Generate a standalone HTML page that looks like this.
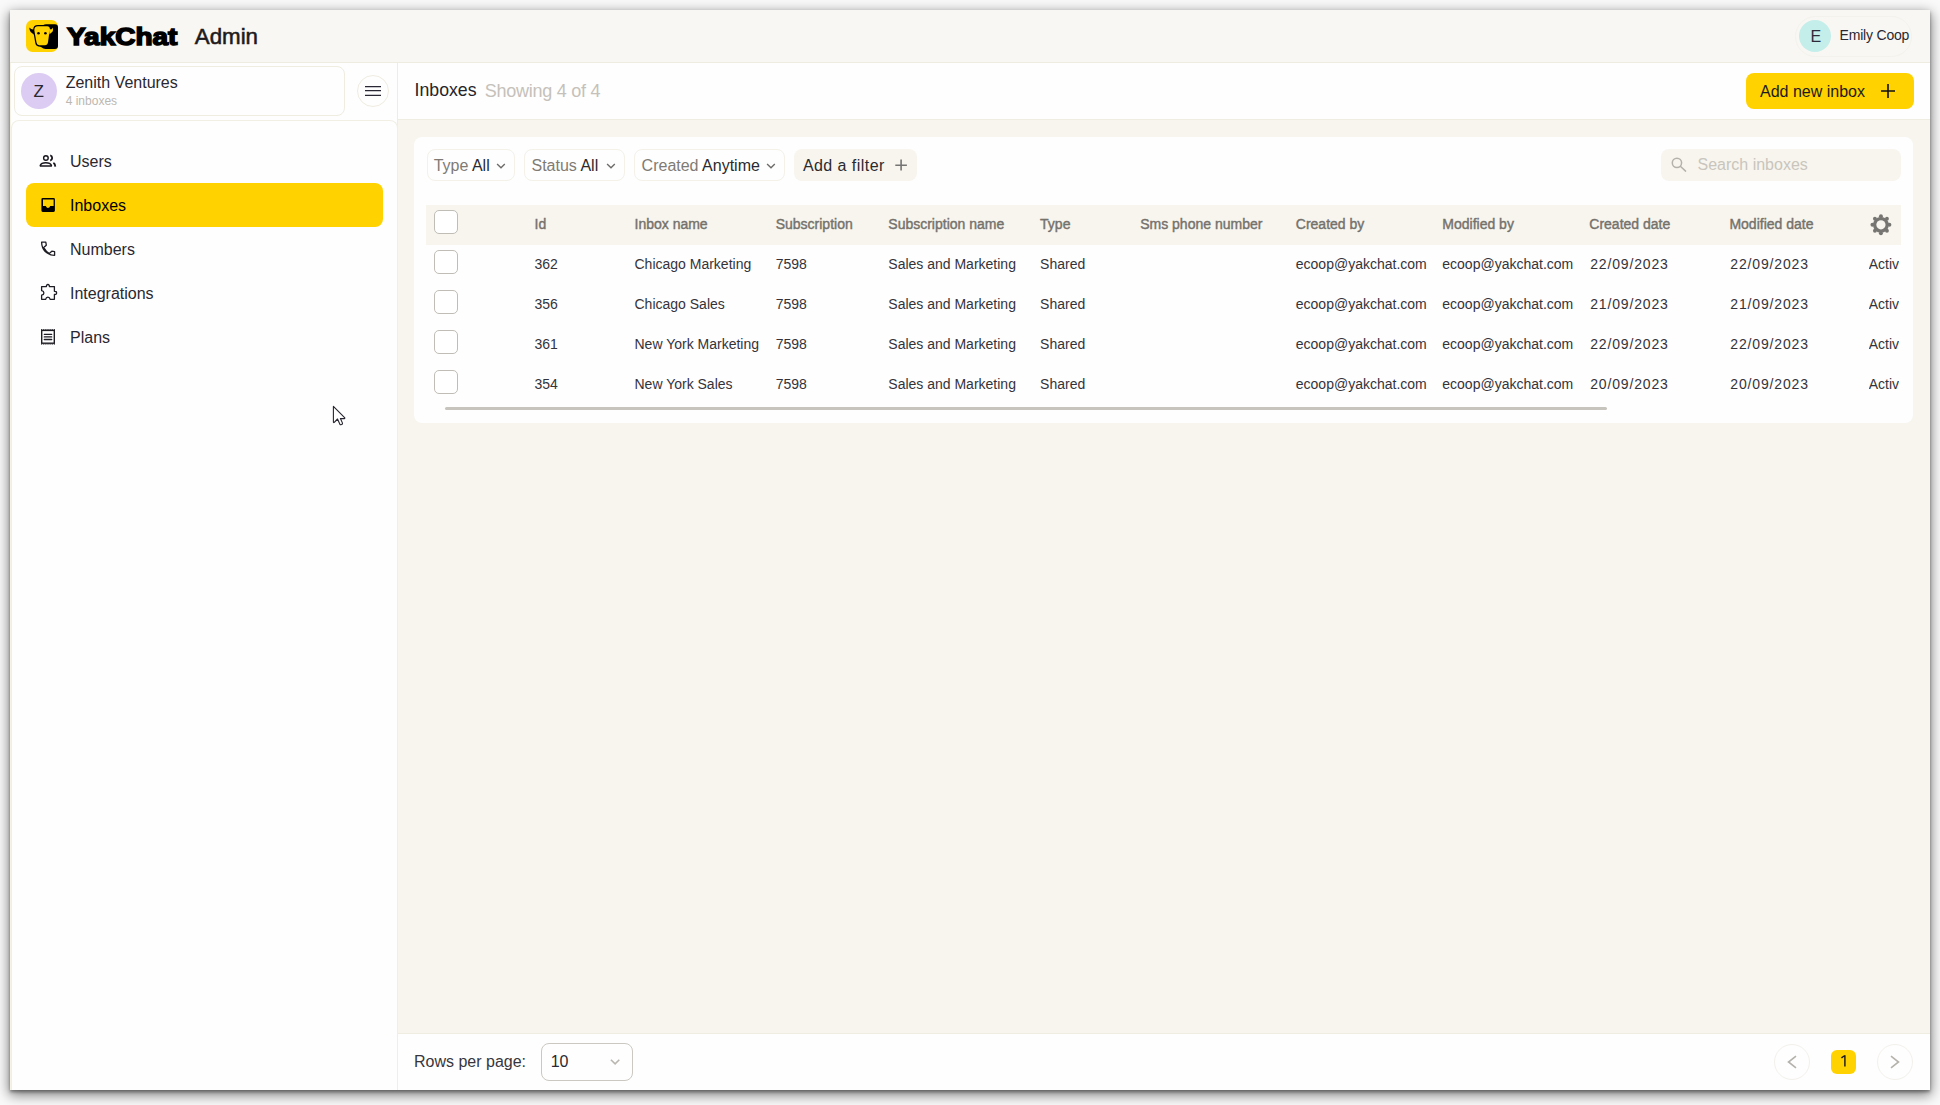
<!DOCTYPE html>
<html><head><meta charset="utf-8">
<style>
*{box-sizing:border-box;margin:0;padding:0}
html,body{width:1940px;height:1105px;overflow:hidden;background:#fafafa}
body{font-family:"Liberation Sans",sans-serif;color:#2a2830;position:relative}
.win{position:absolute;left:10px;top:10px;width:1920px;height:1080px;background:#f7f5ee;box-shadow:0 2px 3px rgba(0,0,0,.35),0 4px 12px 1px rgba(0,0,0,.5);overflow:hidden}
.a{position:absolute}
.t{position:absolute;line-height:1;white-space:nowrap}
svg{position:absolute;overflow:visible}
.chip{top:149px;height:32px;border:1px solid #f3f1e8;border-radius:8px}
.ft{top:158.2px;font-size:16px;color:#2b2a2e}
.fl{color:#7f7b74}
.cb{left:434px;width:24px;height:24px;border:1.3px solid #c0bdb6;border-radius:5px;background:#fff}
.th{top:216.8px;font-size:14px;color:#75716b;-webkit-text-stroke:0.4px #75716b}
.td{font-size:14px;color:#35333a}
.dt{letter-spacing:0.85px}
</style></head><body>
<div class="win"></div>

<!-- HEADER (page coords) -->
<div class="a" style="left:10px;top:10px;width:1920px;height:53px;background:#f8f7f3;border-bottom:1px solid #eeece0"></div>
<!-- logo -->
<svg style="left:26px;top:20px" width="32" height="32" viewBox="0 0 32 32">
  <rect x="0" y="0" width="32" height="32" rx="6.5" fill="#ffd200"/>
  <path d="M7.1 10.4 Q6.9 5.1 11.9 5.1 L17.4 4.9 Q18.3 4.2 20 4.2 H29 Q32 4.2 32 7.2 V26 Q32 28.9 29 28.9 H19.5 Q17.2 28.9 15.4 27.3 Q14.4 26.6 12.5 26.4 Q9.6 26 9.3 23 Z" fill="#000"/>
  <path d="M8.2 9.4 Q5.6 10 3.3 7.6 Q3.4 11.6 6.2 13.3 Q7.2 14 8.2 14.8 Z" fill="#000"/>
  <path d="M8.3 10.3 Q8.2 6.3 12 6.3 H21.2 Q23.8 6.3 23.8 8.9 L22 22.3 Q21.6 25.2 18.8 25.2 H13.3 Q10.9 25.2 10.5 22.6 Z" fill="#ffd200"/>
  <path d="M23 8.6 L24.9 9.6 Q26 9.2 26.8 7.4 Q27.6 11.2 25.6 12.6 Q24.6 13.4 23.6 14.4 Z" fill="#ffd200"/>
  <circle cx="12.5" cy="13.3" r="1.3" fill="#000"/>
  <circle cx="19.4" cy="13.3" r="1.3" fill="#000"/>
</svg>
<div class="t" style="left:66.8px;top:24.9px;font-size:24px;font-weight:700;letter-spacing:0px;color:#000;-webkit-text-stroke:1.5px #000;transform:scaleX(1.165);transform-origin:0 0">YakChat</div>
<div class="t" style="left:194.8px;top:26.2px;font-size:22.3px;color:#1e1b20;-webkit-text-stroke:0.55px #1e1b20">Admin</div>
<!-- user pill -->
<div class="a" style="left:1795px;top:15.5px;width:117px;height:41px;border:1px solid #f4f2ec;border-radius:21px"></div>
<div class="a" style="left:1799px;top:20px;width:32px;height:32px;border-radius:50%;background:#c4eeea"></div>
<div class="t" style="left:1810.5px;top:29px;font-size:16px;color:#2d2b3a">E</div>
<div class="t" style="left:1839.6px;top:28.2px;font-size:14px;color:#2a2830;letter-spacing:-0.2px">Emily Coop</div>

<!-- SIDEBAR -->
<div class="a" style="left:10px;top:63px;width:388px;height:1027px;background:#fefefe;border-right:1px solid #efede1;border-left:1px solid #f5f3e6"></div>
<div class="a" style="left:14px;top:66px;width:331px;height:50px;border:1px solid #efece0;border-radius:8px"></div>
<div class="a" style="left:21px;top:73px;width:36px;height:36px;border-radius:50%;background:#dccbf2"></div>
<div class="t" style="left:33.5px;top:82.7px;font-size:17px;color:#2a2830">Z</div>
<div class="t" style="left:65.7px;top:75px;font-size:16px;color:#2a2830">Zenith Ventures</div>
<div class="t" style="left:65.7px;top:95.2px;font-size:12px;color:#bcb8b0">4 inboxes</div>
<div class="a" style="left:357px;top:75px;width:32px;height:32px;border:1px solid #efece0;border-radius:50%"></div>
<svg style="left:365px;top:85px" width="16" height="12" viewBox="0 0 16 12">
  <path d="M0 1.5H16M0 5.7H16M0 10.4H16" stroke="#2a2734" stroke-width="1.25"/>
</svg>
<!-- nav card -->
<div class="a" style="left:11px;top:120px;width:387px;height:970px;border:1px solid #f1efe4;border-bottom:none;border-radius:8px 8px 0 0"></div>
<div class="a" style="left:26px;top:183px;width:357px;height:44px;background:#ffd200;border-radius:8px"></div>

<div class="t" style="left:70px;top:153.9px;font-size:16px;color:#2a2830">Users</div>
<div class="t" style="left:70px;top:197.9px;font-size:16px;color:#000">Inboxes</div>
<div class="t" style="left:70px;top:241.9px;font-size:16px;color:#2a2830">Numbers</div>
<div class="t" style="left:70px;top:285.9px;font-size:16px;color:#2a2830">Integrations</div>
<div class="t" style="left:70px;top:329.9px;font-size:16px;color:#2a2830">Plans</div>

<!-- TITLE BAR -->
<div class="a" style="left:398px;top:63px;width:1532px;height:57px;background:#fefefe;border-bottom:1px solid #efede1"></div>
<div class="t" style="left:414.6px;top:82px;font-size:17.7px;color:#26242a">Inboxes</div>
<div class="t" style="left:484.7px;top:81.8px;font-size:18px;color:#c5c1ba;letter-spacing:-0.25px">Showing 4 of 4</div>
<div class="a" style="left:1746px;top:73px;width:168px;height:36px;background:#ffd200;border-radius:8px"></div>
<div class="t" style="left:1760px;top:83.9px;font-size:16px;color:#1c1a1e">Add new inbox</div>
<svg style="left:1881px;top:84px" width="14" height="14" viewBox="0 0 14 14">
  <path d="M7 0V14M0 7H14" stroke="#111" stroke-width="1.6"/>
</svg>

<!-- CARD -->
<div class="a" style="left:414px;top:137px;width:1499px;height:286px;background:#fefefe;border-radius:8px"></div>

<!-- FILTERS -->
<div class="a chip" style="left:426.6px;width:88.7px"></div>
<div class="t ft" style="left:433.7px"><span class="fl">Type</span> All</div>
<div class="a chip" style="left:524.4px;width:100.8px"></div>
<div class="t ft" style="left:531.5px"><span class="fl">Status</span> All</div>
<div class="a chip" style="left:634.3px;width:151.1px"></div>
<div class="t ft" style="left:641.6px"><span class="fl">Created</span> Anytime</div>
<div class="a" style="left:794.2px;top:149px;width:122.6px;height:32px;background:#f7f5ee;border-radius:8px"></div>
<div class="t ft" style="left:802.9px;letter-spacing:0.45px">Add a filter</div>
<div class="a" style="left:1661px;top:149px;width:240px;height:32px;background:#f7f5ee;border-radius:8px"></div>
<div class="t ft" style="left:1697.5px;top:157.2px;color:#c9c5bd">Search inboxes</div>
<!-- TABLE -->
<div class="a" style="left:426px;top:205px;width:1475px;height:40px;background:#f7f5ee"></div>
<div class="a cb" style="top:210px"></div>
<div class="t th" style="left:534.5px">Id</div>
<div class="t th" style="left:634.5px">Inbox name</div>
<div class="t th" style="left:775.7px">Subscription</div>
<div class="t th" style="left:888.3px">Subscription name</div>
<div class="t th" style="left:1040.1px">Type</div>
<div class="t th" style="left:1140.2px">Sms phone number</div>
<div class="t th" style="left:1295.8px">Created by</div>
<div class="t th" style="left:1442.3px">Modified by</div>
<div class="t th" style="left:1589.3px">Created date</div>
<div class="t th" style="left:1729.4px">Modified date</div>
<div class="a cb" style="top:250px"></div>
<div class="t td" style="left:534.5px;top:257.25px">362</div>
<div class="t td" style="left:634.5px;top:257.25px">Chicago Marketing</div>
<div class="t td" style="left:775.7px;top:257.25px">7598</div>
<div class="t td" style="left:888.3px;top:257.25px">Sales and Marketing</div>
<div class="t td" style="left:1040.1px;top:257.25px">Shared</div>
<div class="t td" style="left:1295.8px;top:257.25px">ecoop@yakchat.com</div>
<div class="t td" style="left:1442.3px;top:257.25px">ecoop@yakchat.com</div>
<div class="t td dt" style="left:1590.2px;top:257.25px">22/09/2023</div>
<div class="t td dt" style="left:1730.3px;top:257.25px">22/09/2023</div>
<div class="t td" style="left:1868.7px;top:257.25px;width:30.6px;overflow:hidden">Active</div>
<div class="a cb" style="top:290px"></div>
<div class="t td" style="left:534.5px;top:297.25px">356</div>
<div class="t td" style="left:634.5px;top:297.25px">Chicago Sales</div>
<div class="t td" style="left:775.7px;top:297.25px">7598</div>
<div class="t td" style="left:888.3px;top:297.25px">Sales and Marketing</div>
<div class="t td" style="left:1040.1px;top:297.25px">Shared</div>
<div class="t td" style="left:1295.8px;top:297.25px">ecoop@yakchat.com</div>
<div class="t td" style="left:1442.3px;top:297.25px">ecoop@yakchat.com</div>
<div class="t td dt" style="left:1590.2px;top:297.25px">21/09/2023</div>
<div class="t td dt" style="left:1730.3px;top:297.25px">21/09/2023</div>
<div class="t td" style="left:1868.7px;top:297.25px;width:30.6px;overflow:hidden">Active</div>
<div class="a cb" style="top:330px"></div>
<div class="t td" style="left:534.5px;top:337.25px">361</div>
<div class="t td" style="left:634.5px;top:337.25px">New York Marketing</div>
<div class="t td" style="left:775.7px;top:337.25px">7598</div>
<div class="t td" style="left:888.3px;top:337.25px">Sales and Marketing</div>
<div class="t td" style="left:1040.1px;top:337.25px">Shared</div>
<div class="t td" style="left:1295.8px;top:337.25px">ecoop@yakchat.com</div>
<div class="t td" style="left:1442.3px;top:337.25px">ecoop@yakchat.com</div>
<div class="t td dt" style="left:1590.2px;top:337.25px">22/09/2023</div>
<div class="t td dt" style="left:1730.3px;top:337.25px">22/09/2023</div>
<div class="t td" style="left:1868.7px;top:337.25px;width:30.6px;overflow:hidden">Active</div>
<div class="a cb" style="top:370px"></div>
<div class="t td" style="left:534.5px;top:377.25px">354</div>
<div class="t td" style="left:634.5px;top:377.25px">New York Sales</div>
<div class="t td" style="left:775.7px;top:377.25px">7598</div>
<div class="t td" style="left:888.3px;top:377.25px">Sales and Marketing</div>
<div class="t td" style="left:1040.1px;top:377.25px">Shared</div>
<div class="t td" style="left:1295.8px;top:377.25px">ecoop@yakchat.com</div>
<div class="t td" style="left:1442.3px;top:377.25px">ecoop@yakchat.com</div>
<div class="t td dt" style="left:1590.2px;top:377.25px">20/09/2023</div>
<div class="t td dt" style="left:1730.3px;top:377.25px">20/09/2023</div>
<div class="t td" style="left:1868.7px;top:377.25px;width:30.6px;overflow:hidden">Active</div>
<div class="a" style="left:445px;top:407px;width:1162px;height:3px;background:#c7c4be;border-radius:2px"></div>


<!-- nav icons -->
<svg style="left:36px;top:150px" width="24" height="22" viewBox="0 0 24 22" fill="none" stroke="#18161d" stroke-width="1.4">
  <circle cx="9.9" cy="8" r="2.3"/>
  <path d="M14.2 5.4 A2.7 2.7 0 0 1 14.2 10.6" stroke-width="1.8"/>
  <path d="M4.7 16 H15 Q15.6 16 15.4 15.3 Q14.4 12.8 9.8 12.8 Q5.2 12.8 4.3 15.3 Q4.1 16 4.7 16 Z"/>
  <path d="M17.4 12.9 Q19.2 13.9 19.3 16.6" stroke-width="1.8"/>
</svg>
<svg style="left:36px;top:193px" width="24" height="24" viewBox="0 0 24 24">
  <path fill="#000" fill-rule="evenodd" d="M6.7 5 H17.6 Q18.9 5 18.9 6.3 V17.6 Q18.9 18.9 17.6 18.9 H6.7 Q5.4 18.9 5.4 17.6 V6.3 Q5.4 5 6.7 5 Z M7 6.4 V12.9 H9.8 Q10.6 15 12 15 Q13.4 15 14.2 12.9 H17.6 V6.4 Z"/>
</svg>
<svg style="left:36px;top:236px" width="24" height="24" viewBox="0 0 24 24" fill="none" stroke="#1f1d24" stroke-width="1.3" stroke-linejoin="round">
  <path d="M5.6 6.1 H9.8 L10.3 9.2 L7.7 11.6 Q9.9 15.5 13.3 17.5 L15.8 15.2 L18.6 15.7 V19.3 Q12.8 19.1 9.2 15.6 Q5.7 12 5.6 6.1 Z"/>
</svg>
<svg style="left:36px;top:280px" width="24" height="24" viewBox="0 0 24 24" fill="none" stroke="#1f1d24" stroke-width="1.3" stroke-linejoin="round">
  <path d="M5.6 6.6 H10.4 Q10.3 4.5 11.9 4.5 Q13.5 4.5 13.4 6.6 H18.4 V11.3 Q20.6 11.1 20.6 12.9 Q20.6 14.7 18.4 14.5 V19.3 H14.2 Q13.7 17.2 11.9 17.2 Q10.1 17.2 9.6 19.3 H5.6 V15.2 Q7.9 14.7 7.9 12.9 Q7.9 11.1 5.6 10.6 Z"/>
</svg>
<svg style="left:36px;top:324px" width="24" height="24" viewBox="0 0 24 24" fill="none" stroke="#1f1d24">
  <rect x="5.7" y="6.4" width="12.6" height="12.8" stroke-width="1.4"/>
  <path d="M5.2 5.5 H19" stroke-width="1" stroke-dasharray="1 1.1"/>
  <path d="M5.2 20.2 H19" stroke-width="1" stroke-dasharray="1 1.1"/>
  <path d="M8.3 10.3 H15.7 M8.3 12.9 H15.7 M8.3 15.5 H15.7" stroke-width="1.3" stroke-linecap="round"/>
</svg>
<!-- filter chevrons -->
<svg style="left:490px;top:155px" width="24" height="20" viewBox="0 0 24 20" fill="none" stroke="#6e6c6a" stroke-width="1.4"><path d="M7.1 9.1 L11 12.8 L14.8 9.1"/></svg>
<svg style="left:600px;top:155px" width="24" height="20" viewBox="0 0 24 20" fill="none" stroke="#6e6c6a" stroke-width="1.4"><path d="M7.1 9.1 L11 12.8 L14.8 9.1"/></svg>
<svg style="left:760px;top:155px" width="24" height="20" viewBox="0 0 24 20" fill="none" stroke="#6e6c6a" stroke-width="1.4"><path d="M7.1 9.1 L11 12.8 L14.8 9.1"/></svg>
<svg style="left:888px;top:152px" width="26" height="26" viewBox="0 0 26 26" fill="none" stroke="#767472" stroke-width="1.6"><path d="M7.3 13.2 H18.9 M13.1 7.5 V18.6"/></svg>
<!-- search -->
<svg style="left:1664px;top:152px" width="30" height="26" viewBox="0 0 30 26" fill="none" stroke="#b5b2ab" stroke-width="1.5"><circle cx="12.94" cy="10.82" r="4.65"/><path d="M16.6 14.5 L21.6 19.1" stroke-linecap="round"/></svg>
<!-- gear -->
<svg style="left:1866px;top:210px" width="30" height="30" viewBox="0 0 30 30">
  <g fill="#777572">
    <circle cx="14.93" cy="14.8" r="7.9"/>
    <circle cx="14.93" cy="6.3" r="1.95"/><circle cx="14.93" cy="23.3" r="1.95"/>
    <circle cx="6.43" cy="14.8" r="1.95"/><circle cx="23.43" cy="14.8" r="1.95"/>
    <circle cx="8.92" cy="8.79" r="1.95"/><circle cx="20.94" cy="8.79" r="1.95"/>
    <circle cx="8.92" cy="20.81" r="1.95"/><circle cx="20.94" cy="20.81" r="1.95"/>
  </g>
  <circle cx="14.93" cy="14.8" r="4.6" fill="#f7f5ee"/>
</svg>

<!-- FOOTER -->
<div class="a" style="left:398px;top:1033px;width:1532px;height:57px;background:#fefefe;border-top:1px solid #efede1"></div>
<div class="t" style="left:414px;top:1053.9px;font-size:16px;color:#38363c">Rows per page:</div>
<div class="a" style="left:541px;top:1043px;width:92px;height:37.6px;border:1px solid #cbc8c1;border-radius:8px"></div>
<div class="t" style="left:550.7px;top:1054.2px;font-size:16px;color:#2a2830">10</div>
<div class="a" style="left:1774px;top:1044px;width:36px;height:36px;border:1px solid #f3f1eb;border-radius:50%"></div>
<div class="a" style="left:1831px;top:1050px;width:25px;height:24px;background:#ffd200;border-radius:6px"></div>
<svg style="left:1831px;top:1050px" width="25" height="24" viewBox="0 0 25 24" fill="none" stroke="#1c1a1e" stroke-width="1.45"><path d="M13.9 5.3 V16.5 M13.9 5.5 L10.4 7.9"/></svg>
<div class="a" style="left:1877px;top:1044px;width:36px;height:36px;border:1px solid #f3f1eb;border-radius:50%"></div>


<svg style="left:600px;top:1050px" width="24" height="20" viewBox="0 0 24 20" fill="none" stroke="#bab7b0" stroke-width="1.6"><path d="M10.9 9.7 L15.1 13.9 L19.3 9.7"/></svg>
<svg style="left:1774px;top:1044px" width="36" height="36" viewBox="0 0 36 36" fill="none" stroke="#b5b2ac" stroke-width="1.6"><path d="M22 12.2 L14.5 18 L22 23.9"/></svg>
<svg style="left:1877px;top:1044px" width="36" height="36" viewBox="0 0 36 36" fill="none" stroke="#b5b2ac" stroke-width="1.6"><path d="M14 12.2 L21.5 18 L14 23.9"/></svg>
<!-- cursor -->
<svg style="left:320px;top:395px" width="40" height="40" viewBox="0 0 40 40">
  <path d="M13.4 11.3 V27.1 Q13.5 27.9 14.3 27.4 L17.5 24 L19.8 29.1 Q20.4 30 21.4 29.6 L22.1 29.2 Q22.8 28.8 22.4 27.9 L20.4 23.6 H24.3 Q25.2 23.5 24.6 22.7 Z" fill="#fff" stroke="#27252f" stroke-width="1.1" stroke-linejoin="round"/>
</svg>
</body></html>
